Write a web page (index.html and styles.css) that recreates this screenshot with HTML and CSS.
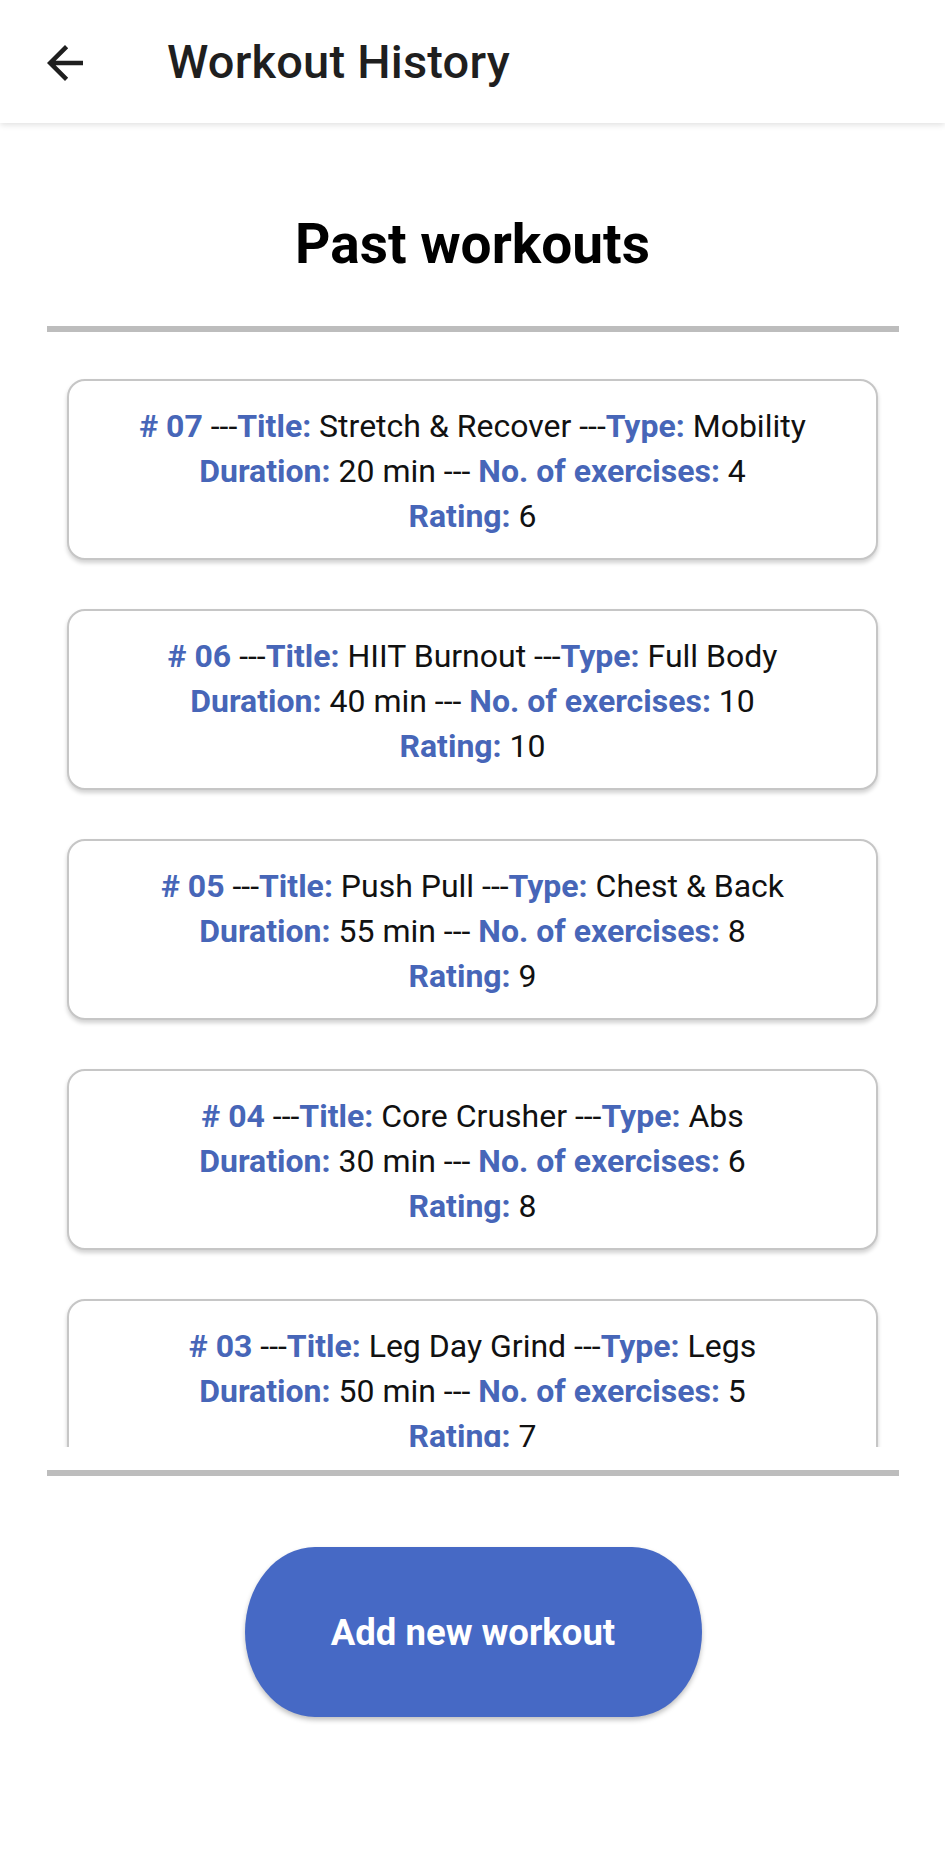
FILE: index.html
```html
<!DOCTYPE html>
<html lang="en">
<head>
<meta charset="utf-8">
<title>Workout History</title>
<link rel="stylesheet" href="styles.css">
</head>
<body>
<header class="appbar">
  <svg class="back" viewBox="0 0 24 24" width="54" height="54" aria-hidden="true">
    <path d="M20 11H7.83l5.59-5.59L12 4l-8 8 8 8 1.41-1.41L7.83 13H20v-2z" fill="#1f1f1f"/>
  </svg>
  <h1 class="title">Workout History</h1>
</header>
<main class="content">
  <h2 class="heading">Past workouts</h2>
  <div class="divider"></div>
  <div class="list">
    <div class="card">
      <p><b># 07</b> ---<b>Title:</b> Stretch &amp; Recover ---<b>Type:</b> Mobility</p>
      <p><b>Duration:</b> 20 min --- <b>No. of exercises:</b> 4</p>
      <p><b>Rating:</b> 6</p>
    </div>
    <div class="card">
      <p><b># 06</b> ---<b>Title:</b> HIIT Burnout ---<b>Type:</b> Full Body</p>
      <p><b>Duration:</b> 40 min --- <b>No. of exercises:</b> 10</p>
      <p><b>Rating:</b> 10</p>
    </div>
    <div class="card">
      <p><b># 05</b> ---<b>Title:</b> Push Pull ---<b>Type:</b> Chest &amp; Back</p>
      <p><b>Duration:</b> 55 min --- <b>No. of exercises:</b> 8</p>
      <p><b>Rating:</b> 9</p>
    </div>
    <div class="card">
      <p><b># 04</b> ---<b>Title:</b> Core Crusher ---<b>Type:</b> Abs</p>
      <p><b>Duration:</b> 30 min --- <b>No. of exercises:</b> 6</p>
      <p><b>Rating:</b> 8</p>
    </div>
    <div class="card">
      <p><b># 03</b> ---<b>Title:</b> Leg Day Grind ---<b>Type:</b> Legs</p>
      <p><b>Duration:</b> 50 min --- <b>No. of exercises:</b> 5</p>
      <p><b>Rating:</b> 7</p>
    </div>
  </div>
  <div class="divider divider-bottom"></div>
  <div class="actions">
    <button class="add-btn" type="button">Add new workout</button>
  </div>
</main>
</body>
</html>
```
FILE: styles.css
```css
* { box-sizing: border-box; }
html, body {
  margin: 0;
  padding: 0;
  background: #ffffff;
  font-family: Roboto, "Liberation Sans", Arial, sans-serif;
}
body { width: 945px; height: 1849px; overflow: hidden; }

.appbar {
  height: 123px;
  display: flex;
  align-items: center;
  padding-left: 38px;
  background: #ffffff;
  box-shadow: 0 2px 6px rgba(0,0,0,0.12);
  position: relative;
  z-index: 2;
}
.back { display: block; flex: none; margin-top: 2px; }
.title {
  margin: 0 0 0 75px;
  font-size: 47px;
  font-weight: 500;
  color: #1f1f1f;
  letter-spacing: 0.2px;
}

.content {
  display: flex;
  flex-direction: column;
}
.heading {
  margin: 0;
  height: 203px;
  padding-top: 91px;
  text-align: center;
  font-size: 55px;
  font-weight: 700;
  color: #000000;
  line-height: 60px;
}
.divider {
  height: 6px;
  margin: 0 46px 0 47px;
  background: #bdbdbd;
}
.list {
  height: 1115px;
  overflow: hidden;
  padding: 47px 0 0;
  display: flex;
  flex-direction: column;
  gap: 49px;
}
.card {
  flex: none;
  margin: 0 67px;
  height: 181px;
  border: 2px solid #c6c6c6;
  border-radius: 18px;
  box-shadow: 0 3px 4px rgba(0,0,0,0.18);
  background: #ffffff;
  padding-top: 23px;
  text-align: center;
  font-size: 32px;
  color: #111111;
}
.card p { margin: 0; line-height: 45px; white-space: nowrap; }
.card b { color: #4766b8; font-weight: 700; }

.divider-bottom { margin-top: 23px; }

.actions {
  display: flex;
  justify-content: center;
  padding-top: 71px;
}
.add-btn {
  width: 457px;
  height: 170px;
  border: none;
  border-radius: 70px / 85px;
  background: #4669c5;
  color: #ffffff;
  font-family: Roboto, "Liberation Sans", Arial, sans-serif;
  font-size: 36.5px;
  font-weight: 700;
  box-shadow: 0 3px 5px rgba(0,0,0,0.25);
  margin-left: 1px;
}
```
